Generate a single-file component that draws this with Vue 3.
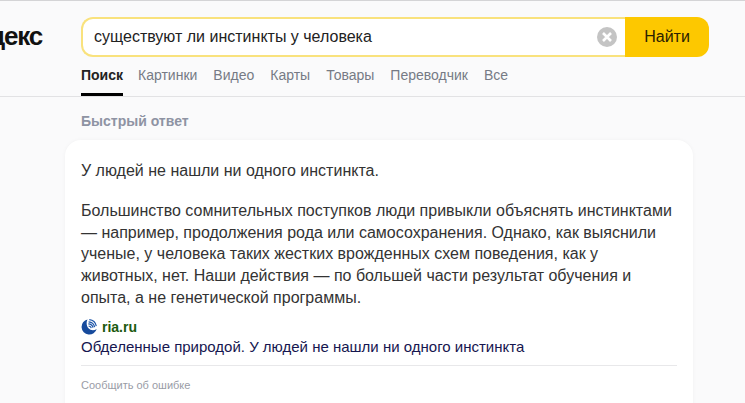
<script setup>
const tabs = ['Картинки', 'Видео', 'Карты', 'Товары', 'Переводчик', 'Все']
</script>

<template>
  <div class="page">
    <header class="header">
      <div class="top">
        <div class="logo"><span>Яндекс</span></div>
        <form class="search" @submit.prevent>
          <div class="field">
            <span class="query">существуют ли инстинкты у человека</span>
            <svg class="clear" width="20" height="20" viewBox="0 0 20 20">
              <circle cx="10" cy="10" r="10" fill="#c4c4c4" />
              <path d="M6 6l8 8M14 6l-8 8" stroke="#fff" stroke-width="2.6" />
            </svg>
          </div>
          <button class="go" type="submit">Найти</button>
        </form>
      </div>
      <nav class="tabs">
        <a class="tab active">Поиск</a>
        <a v-for="t in tabs" :key="t" class="tab">{{ t }}</a>
      </nav>
    </header>
    <main class="main">
      <h2 class="title">Быстрый ответ</h2>
      <section class="card">
        <p class="lead">У людей не нашли ни одного инстинкта.</p>
        <p class="body">Большинство сомнительных поступков люди привыкли объяснять инстинктами<br>— например, продолжения рода или самосохранения. Однако, как выяснили<br>ученые, у человека таких жестких врожденных схем поведения, как у<br>животных, нет. Наши действия — по большей части результат обучения и<br>опыта, а не генетической программы.</p>
        <div class="source">
          <svg class="favicon" width="16" height="16" viewBox="0 0 16 16">
            <path d="M6.500.4A7.700 7.700 0 1 0 15.700 10C13 11.800 9.500 11.500 7.500 9.300S5 3 6.500.4Z" fill="#164a9c" />
            <path d="M8.300.7c3.500.4 6.300 3 7 6.500M7.600 2.800c3 .2 5.500 2.300 6 5.300M7.300 4.900c2.300.1 4.300 1.600 4.700 3.800M7.600 7c1.300.2 2.400 1 2.700 2.200" fill="none" stroke="#1d55a8" stroke-width="1.200" />
          </svg>
          <span class="domain">ria.ru</span>
        </div>
        <a class="link">Обделенные природой. У людей не нашли ни одного инстинкта</a>
        <div class="report">Сообщить об ошибке</div>
      </section>
    </main>
  </div>
</template>

<style>
html, body { margin: 0; height: 100%; overflow: hidden; background: #fafafb; }
</style>

<style scoped>
.page {
  height: 403px;
  overflow: hidden;
  background: #fafafb;
  font-family: Arial, "Liberation Sans", sans-serif;
  border-top: 1px solid #d4d4d6;
  box-sizing: border-box;
}
.header {
  height: 96px;
  box-sizing: border-box;
  border-bottom: 1px solid #e2e2e4;
  padding-top: 16px;
}
.top { display: flex; align-items: center; }
.logo {
  width: 81px;
  height: 40px;
  overflow: hidden;
  display: flex;
  justify-content: flex-end;
  flex: none;
}
.logo span {
  flex: none;
  font-size: 26px;
  font-weight: 700;
  letter-spacing: -1.2px;
  line-height: 38px;
  color: #111;
  padding-right: 39px;
}
.search { display: flex; width: 628px; height: 40px; }
.field {
  flex: 1;
  display: flex;
  align-items: center;
  justify-content: space-between;
  background: #fff;
  border: 2px solid #f9e27d;
  border-right: none;
  border-radius: 12px 0 0 12px;
  padding: 0 8px 0 11px;
  box-sizing: border-box;
}
.query { font-size: 16px; color: #222; line-height: 20px; }
.clear { flex: none; }
.go {
  width: 84px;
  border: none;
  padding: 0;
  background: #fdc800;
  border-radius: 0 12px 12px 0;
  font: 16px Arial, "Liberation Sans", sans-serif;
  color: #2b2200;
}
.tabs {
  display: flex;
  gap: 16px;
  padding-left: 81px;
  margin-top: 1px;
}
.tab {
  height: 38px;
  box-sizing: border-box;
  padding-top: 8px;
  font-size: 14px;
  line-height: 18px;
  color: #767a85;
}
.tab.active {
  font-weight: 700;
  color: #222;
  border-bottom: 3px solid #000;
  margin-right: -1px;
}
.main { padding-left: 65px; }
.title {
  margin: 0;
  padding: 15px 0 0 16px;
  font-size: 14px;
  line-height: 18px;
  font-weight: 700;
  color: #8e93a3;
}
.card {
  width: 628px;
  height: 300px;
  margin-top: 10px;
  box-sizing: border-box;
  padding: 20px 16px;
  background: #fff;
  border-radius: 16px;
  box-shadow: 0 0 4px rgba(0, 0, 0, .04);
}
.lead, .body {
  margin: 0;
  font-size: 16px;
  line-height: 21px;
  color: #333;
}
.body { margin-top: 19px; line-height: 21.7px; }
.source { display: flex; align-items: center; gap: 5px; margin-top: 9.500px; height: 18px; }
.favicon { flex: none; }
.domain { font-size: 14px; font-weight: 700; color: #1c5a0e; }
.link {
  display: block;
  font-size: 15px;
  line-height: 20px;
  color: #16164f;
  margin-top: 1px;
}
.report {
  margin-top: 8px;
  padding-top: 12px;
  border-top: 1px solid #e8e8ea;
  font-size: 11px;
  line-height: 15px;
  color: #999ca6;
}
</style>
